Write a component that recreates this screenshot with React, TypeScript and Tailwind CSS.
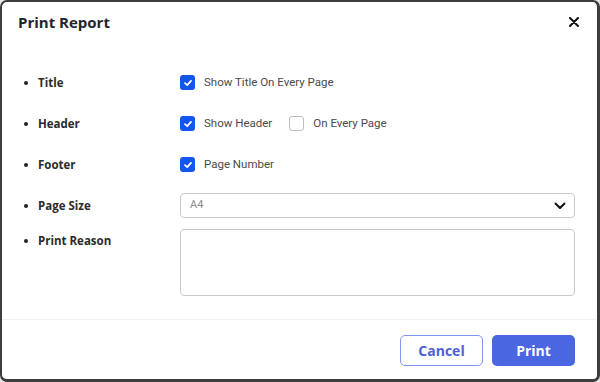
import React from "react";

const labelFont = { fontFamily: '"Open Sans", "Noto Sans", sans-serif' };
const bodyFont = { fontFamily: 'Roboto, "Liberation Sans", sans-serif' };

const Checkbox = ({ checked }: { checked?: boolean }) =>
  checked ? (
    <span className="w-[15px] h-[15px] rounded-[3px] bg-[#1455ee] flex items-center justify-center shrink-0">
      <svg width="10" height="10" viewBox="0 0 10 10" fill="none">
        <path d="M2 5.2 L4.2 7.2 L8 2.9" stroke="white" strokeWidth="1.8" strokeLinecap="round" strokeLinejoin="round" />
      </svg>
    </span>
  ) : (
    <span className="w-[15px] h-[15px] rounded-[3px] border border-[#bdbdbd] bg-white shrink-0" />
  );

const Option = ({ checked, label }: { checked?: boolean; label: string }) => (
  <label className="flex items-center gap-[9px] text-[11.5px] text-[#4a4a4a]" style={bodyFont}>
    <Checkbox checked={checked} />
    <span>{label}</span>
  </label>
);

const RowLabel = ({ children }: { children: React.ReactNode }) => (
  <div className="w-[156px] shrink-0 flex items-center text-[11.5px] font-bold text-[#2b2b2b]" style={labelFont}>
    <span className="w-[4px] h-[4px] rounded-full bg-[#222] mr-[10px]" />
    {children}
  </div>
);

const App = () => {
  return (
    <div className="w-[600px] h-[382px] bg-[#e9e9e9]">
      <div className="w-full h-full bg-white border-2 border-b-[3px] border-r-[3px] border-[#3d3d3d] rounded-[7px] flex flex-col overflow-hidden">
        <div className="h-[40px] flex items-center justify-between pl-[16px] pr-[18px]">
          <h1 className="text-[15px] font-bold text-[#1f2530]" style={labelFont}>
            Print Report
          </h1>
          <svg width="10" height="10" viewBox="0 0 10 10">
            <path d="M1 1 L9 9 M9 1 L1 9" stroke="#111" strokeWidth="2" strokeLinecap="round" />
          </svg>
        </div>

        <div className="flex-1 pl-[22px] pr-[22px] pt-[20px]">
          <div className="h-[41px] flex items-center">
            <RowLabel>Title</RowLabel>
            <Option checked label="Show Title On Every Page" />
          </div>
          <div className="h-[41px] flex items-center">
            <RowLabel>Header</RowLabel>
            <div className="flex items-center gap-[17px]">
              <Option checked label="Show Header" />
              <Option label="On Every Page" />
            </div>
          </div>
          <div className="h-[41px] flex items-center">
            <RowLabel>Footer</RowLabel>
            <Option checked label="Page Number" />
          </div>
          <div className="mt-[8px] flex items-center">
            <RowLabel>Page Size</RowLabel>
            <div className="flex-1 h-[25px] border border-[#c9c9c9] rounded-[4px] flex items-center justify-between pl-[9px] pr-[8px]">
              <span className="text-[11px] text-[#8a8a8a]" style={bodyFont}>
                A4
              </span>
              <svg width="12" height="8" viewBox="0 0 12 8">
                <path d="M1.5 1.5 L6 6 L10.5 1.5" stroke="#111" strokeWidth="2" fill="none" strokeLinecap="round" strokeLinejoin="round" />
              </svg>
            </div>
          </div>
          <div className="mt-[11px] flex items-start">
            <div className="pt-[3px]">
              <RowLabel>Print Reason</RowLabel>
            </div>
            <div className="flex-1 h-[67px] border border-[#c9c9c9] rounded-[4px]" />
          </div>
        </div>

        <div className="border-t border-[#f1f1f1] h-[60px] flex items-start justify-end gap-[9px] pt-[15px] pr-[22px]">
          <button
            className="w-[83px] h-[31px] rounded-[5px] border border-[#7f95ef] bg-white text-[14px] font-bold text-[#4a63d8]"
            style={labelFont}
          >
            Cancel
          </button>
          <button
            className="w-[83px] h-[31px] rounded-[5px] bg-[#4a66e0] text-[14px] font-bold text-white"
            style={labelFont}
          >
            Print
          </button>
        </div>
      </div>
    </div>
  );
};

export default App;
